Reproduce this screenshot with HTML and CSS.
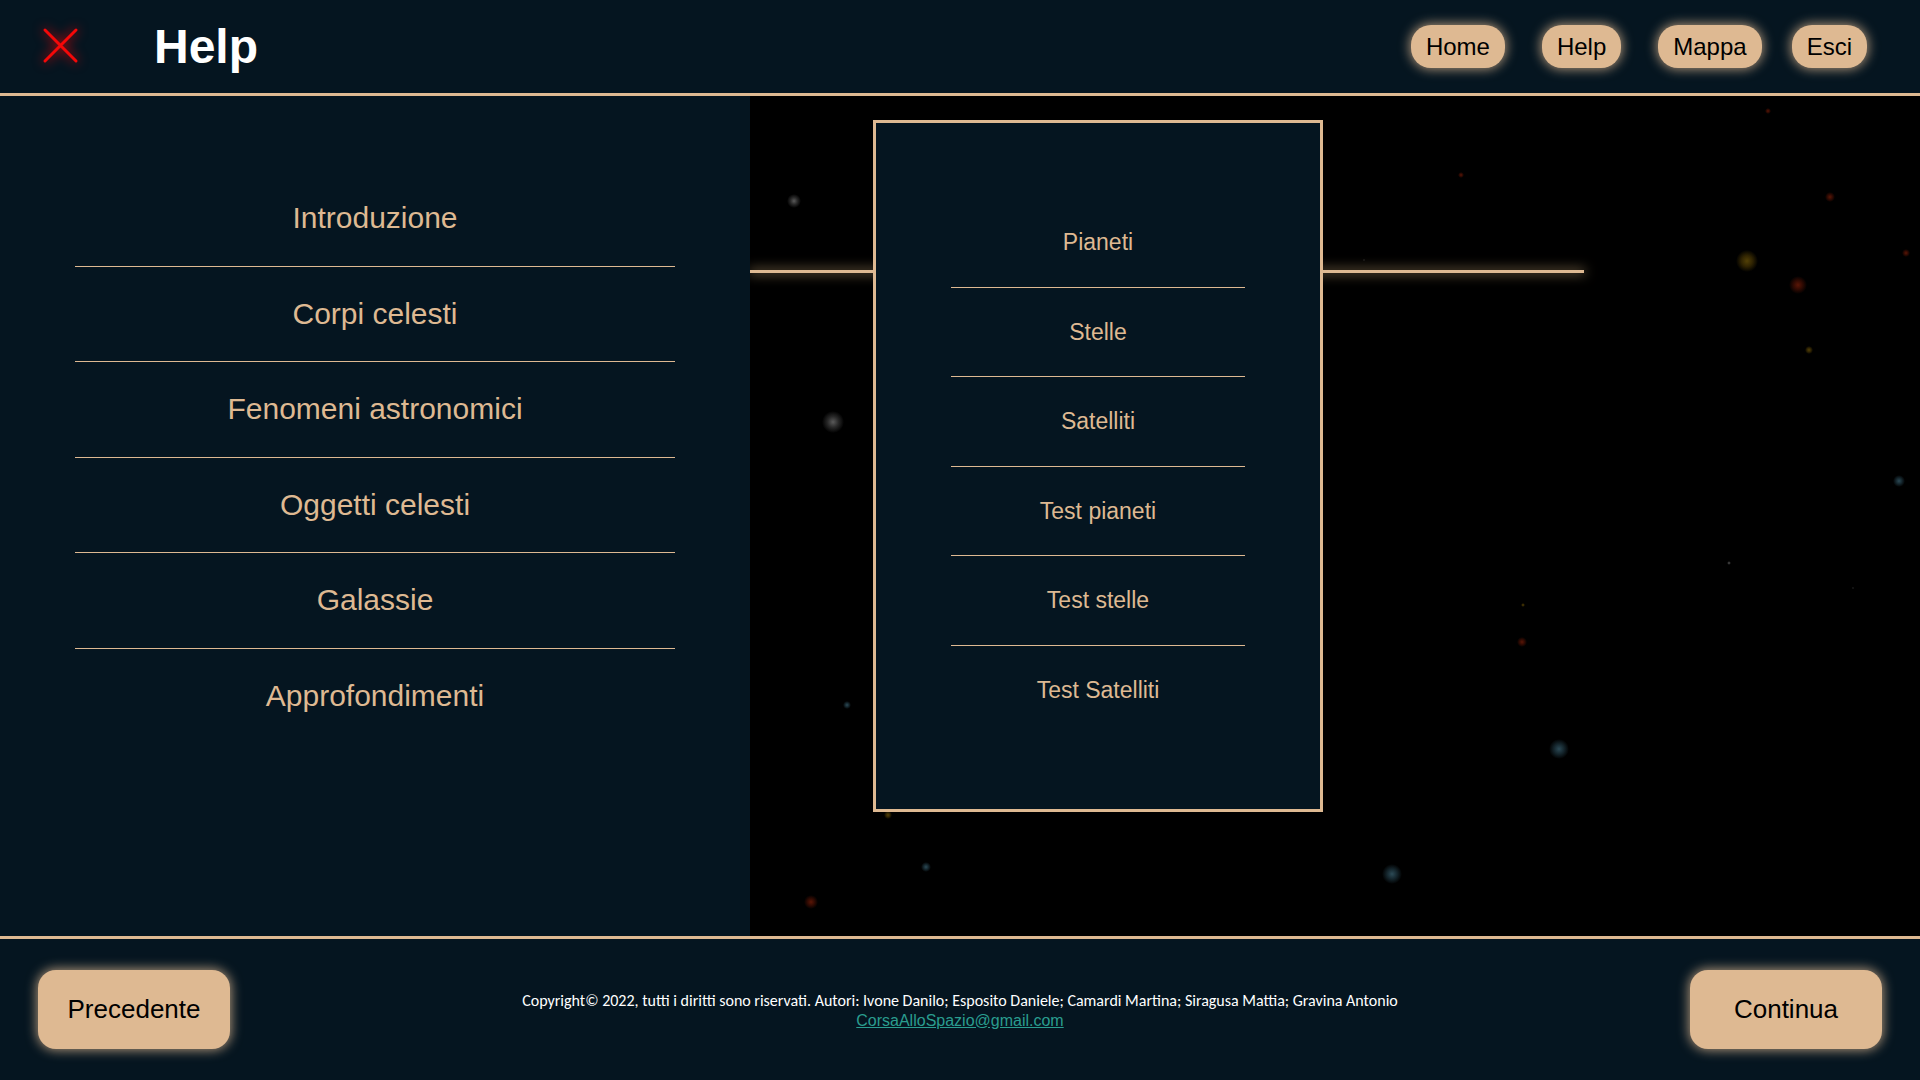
FILE: index.html
```html
<!DOCTYPE html>
<html lang="it">
<head>
<meta charset="utf-8">
<meta name="viewport" content="width=device-width, initial-scale=1">
<title>Help</title>
<link rel="stylesheet" href="styles.css">
</head>
<body>
<header class="topbar">
  <button class="close" type="button" aria-label="Chiudi">
    <svg class="close-icon" viewBox="0 0 36 36" aria-hidden="true"><path d="M3 2 34 33M34 2 3 33"/></svg>
  </button>
  <h1 class="title">Help</h1>
  <nav class="topnav" aria-label="Principale">
    <div class="topnav-group">
      <a class="pill" href="#home">Home</a>
      <a class="pill" href="#help">Help</a>
      <a class="pill" href="#mappa">Mappa</a>
    </div>
    <a class="pill" href="#esci">Esci</a>
  </nav>
</header>

<main class="main">
  <nav class="sidebar" aria-label="Argomenti">
    <ul class="menu">
      <li class="menu-item"><a class="menu-link" href="#introduzione">Introduzione</a></li>
      <li class="menu-item"><a class="menu-link" href="#corpi">Corpi celesti</a></li>
      <li class="menu-item"><a class="menu-link" href="#fenomeni">Fenomeni astronomici</a></li>
      <li class="menu-item"><a class="menu-link" href="#oggetti">Oggetti celesti</a></li>
      <li class="menu-item"><a class="menu-link" href="#galassie">Galassie</a></li>
      <li class="menu-item"><a class="menu-link" href="#approfondimenti">Approfondimenti</a></li>
    </ul>
  </nav>

  <section class="space">
    <svg class="stars" viewBox="0 0 1170 840" preserveAspectRatio="xMinYMin slice" aria-hidden="true">
      <defs>
        <radialGradient id="white"><stop offset="0" stop-color="#5a5a5a"/><stop offset="0.5" stop-color="#282828"/><stop offset="1" stop-color="#000"/></radialGradient>
        <radialGradient id="red"><stop offset="0" stop-color="#5a1606"/><stop offset="0.5" stop-color="#300a02"/><stop offset="1" stop-color="#000"/></radialGradient>
        <radialGradient id="gold"><stop offset="0" stop-color="#524006"/><stop offset="0.5" stop-color="#302402"/><stop offset="1" stop-color="#000"/></radialGradient>
        <radialGradient id="blue"><stop offset="0" stop-color="#2c4a56"/><stop offset="0.5" stop-color="#15262d"/><stop offset="1" stop-color="#000"/></radialGradient>
      </defs>
      <g fill="url(#white)">
        <circle cx="44" cy="105" r="7"/><circle cx="83" cy="326" r="11"/>
        <circle cx="614" cy="164" r="1"/><circle cx="979" cy="467" r="2"/><circle cx="1103" cy="492" r="1"/>
      </g>
      <g fill="url(#red)">
        <circle cx="1018" cy="15" r="3"/><circle cx="711" cy="79" r="3"/><circle cx="1080" cy="101" r="5"/>
        <circle cx="1048" cy="189" r="9"/><circle cx="1156" cy="157" r="4"/><circle cx="772" cy="546" r="5"/>
        <circle cx="61" cy="806" r="7"/>
      </g>
      <g fill="url(#gold)">
        <circle cx="997" cy="165" r="11"/><circle cx="1059" cy="254" r="4"/><circle cx="138" cy="719" r="4"/>
        <circle cx="773" cy="509" r="2"/>
      </g>
      <g fill="url(#blue)">
        <circle cx="1149" cy="385" r="6"/><circle cx="97" cy="609" r="4"/><circle cx="176" cy="771" r="5"/>
        <circle cx="642" cy="778" r="10"/><circle cx="809" cy="653" r="10"/>
      </g>
    </svg>
    <div class="connector"></div>
    <nav class="panel" aria-label="Corpi celesti">
      <ul class="menu menu-small">
        <li class="menu-item"><a class="menu-link" href="#pianeti">Pianeti</a></li>
        <li class="menu-item"><a class="menu-link" href="#stelle">Stelle</a></li>
        <li class="menu-item"><a class="menu-link" href="#satelliti">Satelliti</a></li>
        <li class="menu-item"><a class="menu-link" href="#test-pianeti">Test pianeti</a></li>
        <li class="menu-item"><a class="menu-link" href="#test-stelle">Test stelle</a></li>
        <li class="menu-item"><a class="menu-link" href="#test-satelliti">Test Satelliti</a></li>
      </ul>
    </nav>
  </section>
</main>

<footer class="bottombar">
  <button class="step" type="button">Precedente</button>
  <div class="credits">
    <p class="copyright">Copyright© 2022, tutti i diritti sono riservati. Autori: Ivone Danilo; Esposito Daniele; Camardi Martina; Siragusa Mattia; Gravina Antonio</p>
    <a class="mail" href="mailto:CorsaAlloSpazio@gmail.com">CorsaAlloSpazio@gmail.com</a>
  </div>
  <button class="step" type="button">Continua</button>
</footer>
</body>
</html>
```
FILE: styles.css
```css
:root {
  --night: #051520;
  --sand: #deb992;
  --glow: 0 0 12px 1px rgba(222, 185, 146, 0.8);
}

* {
  box-sizing: border-box;
}

body {
  display: flex;
  flex-direction: column;
  min-height: 100vh;
  margin: 0;
  background: var(--night);
  font-family: Arial, "Liberation Sans", sans-serif;
}

.topbar {
  display: flex;
  align-items: center;
  min-height: 96px;
  padding: 0 53px 0 42px;
  border-bottom: 3px solid var(--sand);
}

.close {
  display: flex;
  padding: 0 0 2px;
  border: 0;
  background: none;
  cursor: pointer;
}

.close-icon {
  width: 36px;
  height: 36px;
  overflow: visible;
  fill: none;
  stroke: #f50808;
  stroke-width: 3;
  stroke-linecap: round;
  filter: drop-shadow(0 0 6px #f00);
}

.title {
  margin: 0 auto 0 76px;
  color: #fff;
  font-size: 48px;
  line-height: 56px;
}

.topnav {
  display: flex;
  gap: 30px;
}

.topnav-group {
  display: flex;
  gap: 37px;
}

.pill {
  padding: 8px 15px;
  border-radius: 20px;
  background: var(--sand);
  box-shadow: var(--glow);
  color: #000;
  font-size: 24px;
  line-height: 27px;
  text-decoration: none;
}

.main {
  display: flex;
  flex: 1;
}

.sidebar {
  display: flex;
  flex: 0 1 750px;
  padding: 75px 75px 192px;
}

.menu {
  display: grid;
  grid-auto-rows: 1fr;
  flex: 1;
  margin: 0;
  padding: 0;
  list-style: none;
  font-size: 30px;
  line-height: 34px;
}

.menu-small {
  font-size: 23px;
  line-height: 28px;
}

.menu-item {
  display: flex;
  border-bottom: 1px solid var(--sand);
}

.menu-item:last-child {
  border-color: transparent;
}

.menu-link {
  display: grid;
  place-items: center;
  flex: 1;
  padding: 24px 0;
  color: var(--sand);
  text-align: center;
  text-decoration: none;
}

.space {
  position: relative;
  display: flex;
  flex: 1;
  padding: 24px 123px 124px;
  background: #000;
}

.stars {
  position: absolute;
  inset: 0;
  width: 100%;
  height: 100%;
}

/* Beam that links the open topic to its panel */
.connector {
  position: absolute;
  top: 174px;
  left: 0;
  width: 834px;
  max-width: 100%;
  height: 3px;
  background: var(--sand);
  box-shadow: 0 0 12px 1px rgba(222, 185, 130, 0.6);
  clip-path: inset(-20px -20px -20px 0);
}

.panel {
  position: relative;
  display: flex;
  flex: 0 1 450px;
  padding: 75px 75px 74px;
  border: 3px solid var(--sand);
  background: var(--night);
}

.bottombar {
  display: flex;
  align-items: center;
  justify-content: space-between;
  min-height: 144px;
  padding: 0 38px;
  border-top: 3px solid var(--sand);
}

.step {
  width: 192px;
  padding: 24px 0;
  border: 0;
  border-radius: 18px;
  background: var(--sand);
  box-shadow: var(--glow);
  color: #000;
  font-family: inherit;
  font-size: 26px;
  line-height: 31px;
  cursor: pointer;
}

.credits {
  padding-top: 2px;
  font-size: 16px;
  line-height: 20px;
  text-align: center;
}

.copyright {
  margin: 0;
  color: #fff;
  font-family: Calibri, Carlito, Lato, sans-serif;
}

.mail {
  color: #2a9d8f;
}
```
